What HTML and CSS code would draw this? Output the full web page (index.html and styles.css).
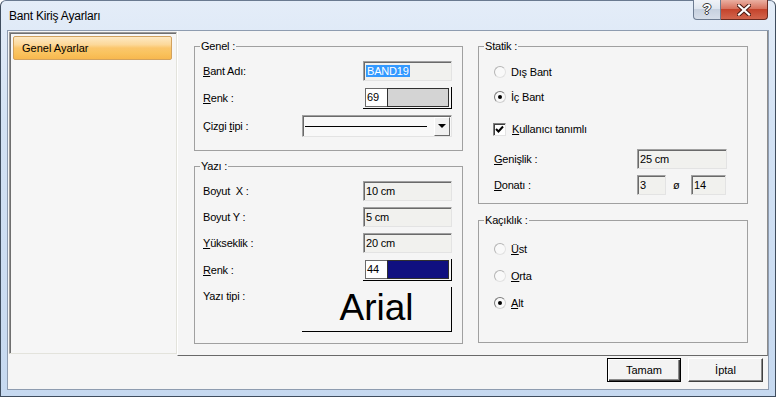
FILE: index.html
```html
<!DOCTYPE html>
<html lang="tr">
<head>
  <meta charset="UTF-8" />
  <title>Bant Kiriş Ayarları</title>
  <link rel="stylesheet" href="styles.css">
</head>
<body>
  <div class="window">
    <div class="titlebar">
      <span class="title">Bant Kiriş Ayarları</span>
      <div class="caption-btns">
        <span class="cap-help">?</span>
        <span class="cap-close">
          <svg width="14" height="12" viewBox="0 0 14 12">
            <path d="M2 1.5 L12 10.5 M12 1.5 L2 10.5" stroke="#4a1a12" stroke-width="4.2" stroke-linecap="square"/>
            <path d="M2 1.5 L12 10.5 M12 1.5 L2 10.5" stroke="#fff" stroke-width="2.2" stroke-linecap="square"/>
          </svg>
        </span>
      </div>
    </div>

    <div class="client">
      <div class="main">
        <div class="sidebar">
          <div class="nav-item">Genel Ayarlar</div>
        </div>

        <div class="panel">
          <div class="col">
            <div class="group genel">
              <div class="group-title">Genel :</div>
              <div class="group-body">
                <div class="row">
                  <span class="lbl"><u>B</u>ant Adı:</span>
                  <span class="edit"><span class="sel">BAND19</span></span>
                </div>
                <div class="row">
                  <span class="lbl"><u>R</u>enk :</span>
                  <span class="colorbox">
                    <span class="color-num">69</span>
                    <span class="color-swatch swatch-gray"></span>
                  </span>
                </div>
                <div class="row">
                  <span class="lbl lbl-short">Çizgi <u>t</u>ipi :</span>
                  <span class="combo">
                    <span class="combo-line"></span>
                    <span class="combo-btn"><span class="arrow"></span></span>
                  </span>
                </div>
              </div>
            </div>

            <div class="group yazi">
              <div class="group-title">Yazı :</div>
              <div class="group-body">
                <div class="row">
                  <span class="lbl">Boyut&nbsp; X :</span>
                  <span class="edit">10 cm</span>
                </div>
                <div class="row">
                  <span class="lbl">Boyut Y :</span>
                  <span class="edit">5 cm</span>
                </div>
                <div class="row">
                  <span class="lbl"><u>Y</u>ükseklik :</span>
                  <span class="edit">20 cm</span>
                </div>
                <div class="row">
                  <span class="lbl"><u>R</u>enk :</span>
                  <span class="colorbox">
                    <span class="color-num">44</span>
                    <span class="color-swatch swatch-navy"></span>
                  </span>
                </div>
                <div class="row font-row">
                  <span class="lbl lbl-short">Yazı tipi :</span>
                  <span class="font-box">Arial</span>
                </div>
              </div>
            </div>
          </div>

          <div class="col col-right">
            <div class="group statik">
              <div class="group-title">Statik :</div>
              <div class="group-body">
                <div class="radio-row mt-10"><span class="radio"></span>Dış Bant</div>
                <div class="radio-row mt-7"><span class="radio checked"></span>İç Bant</div>
                <div class="check-row mt-13">
                  <span class="check">
                    <svg width="11" height="11" viewBox="0 0 11 11"><path d="M2 5 L4.5 7.5 L9 2.5" fill="none" stroke="#000" stroke-width="2"/></svg>
                  </span>
                  <u>K</u>ullanıcı tanımlı
                </div>
                <div class="row mt-10">
                  <span class="lbl lbl-wide"><u>G</u>enişlik :</span>
                  <span class="edit edit-wide">25 cm</span>
                </div>
                <div class="row mt-6">
                  <span class="lbl lbl-wide"><u>D</u>onatı :</span>
                  <span class="edit edit-small">3</span>
                  <span class="phi">ø</span>
                  <span class="edit edit-mid">14</span>
                </div>
              </div>
            </div>

            <div class="group kacik">
              <div class="group-title">Kaçıklık :</div>
              <div class="group-body radios">
                <div class="radio-row"><span class="radio"></span><u>Ü</u>st</div>
                <div class="radio-row"><span class="radio"></span><u>O</u>rta</div>
                <div class="radio-row"><span class="radio checked"></span><u>A</u>lt</div>
              </div>
            </div>
          </div>
        </div>
      </div>

      <div class="footer">
        <button class="btn btn-default" type="button">Tamam</button>
        <button class="btn" type="button">İptal</button>
      </div>
    </div>
  </div>
</body>
</html>
```

FILE: styles.css
```css
* {
  box-sizing: border-box;
}
body {
  margin: 0;
  width: 776px;
  height: 397px;
  overflow: hidden;
  font-family: "Liberation Sans", Arial, sans-serif;
  font-size: 11px;
  color: #000;
  background: #fff;
}
u {
  text-decoration: underline;
  text-underline-offset: 1px;
}

/* window frame */
.window {
  width: 776px;
  height: 397px;
  display: flex;
  flex-direction: column;
  padding: 0 6px 6px 6px;
  border: 1px solid #3f4d5e;
  border-top-color: #6a7a90;
  border-radius: 6px 6px 0 0;
  background: linear-gradient(#e4edf8, #d3e2f4 30%, #c6d9f0 100%);
}
.titlebar {
  height: 29px;
  display: flex;
  justify-content: space-between;
  align-items: flex-start;
}
.title {
  margin: 8px 0 0 2px;
  font-size: 12px;
  line-height: 14px;
  letter-spacing: -0.2px;
}
.caption-btns {
  display: flex;
  margin: -1px 1px 0 0;
}
.cap-help {
  width: 28px;
  height: 20px;
  border: 1px solid #6d7c91;
  border-top: none;
  border-radius: 0 0 0 4px;
  background: linear-gradient(#f0f3f8, #dfe6ef 45%, #c7d1df 50%, #d6dee9);
  color: #fff;
  font-weight: bold;
  font-size: 14px;
  line-height: 18px;
  text-align: center;
  text-shadow: 1px 0 #3a3a3a, -1px 0 #3a3a3a, 0 1px #3a3a3a, 0 -1px #3a3a3a;
}
.cap-close {
  width: 47px;
  height: 20px;
  border: 1px solid #6b2a20;
  border-left: none;
  border-top: none;
  border-radius: 0 0 4px 0;
  background: linear-gradient(#eab0a2, #d8735f 45%, #c4442c 50%, #d2654d);
  display: flex;
  align-items: center;
  justify-content: center;
}

/* client area */
.client {
  flex: 1;
  display: flex;
  flex-direction: column;
  border: 1px solid #8e9cb0;
  background: #f5f5f5;
}
.main {
  height: 325px;
  display: flex;
}
.sidebar {
  width: 168px;
  margin: 1px 0 2px 1px;
  padding: 3px 4px 0 3px;
  border: 1px solid;
  border-color: #9a9a9a #e3e3dc #e3e3dc #9a9a9a;
  box-shadow: inset 1px 1px 0 #6f6f6f;
  background: #f6f6f6;
}
.nav-item {
  height: 24px;
  padding-left: 8px;
  line-height: 22px;
  border: 1px solid #d2a25e;
  border-radius: 2px;
  background: linear-gradient(#fde9c4 0%, #fcd899 35%, #fbc66c 50%, #fac460 70%, #f8b84e 100%);
}
.panel {
  flex: 1;
  display: flex;
  gap: 15px;
  padding: 15px 0 0 16px;
  border-left: 1px solid #fff;
  border-right: 1px solid #8b8b8b;
  border-bottom: 1px solid #696969;
}
.col {
  width: 269px;
  display: flex;
  flex-direction: column;
  gap: 15px;
}
.col-right {
  width: 270px;
  gap: 16px;
}

/* group boxes */
.group {
  border: 1px solid #a0a0a0;
}
.genel { height: 105px; }
.yazi { height: 178px; }
.statik { height: 158px; }
.kacik { height: 123px; }
.group-title {
  width: fit-content;
  height: 14px;
  margin: -8px 0 0 5px;
  padding: 0 1px;
  line-height: 14px;
  background: #f5f5f5;
  letter-spacing: -0.2px;
}
.group-body {
  display: flex;
  flex-direction: column;
  gap: 6px;
  padding: 8px 10px 0 8px;
}
.statik .group-body {
  gap: 0;
  padding: 0 0 0 15px;
}
.group-body.radios {
  gap: 9px;
  padding: 13px 0 0 15px;
}
.mt-6 { margin-top: 6px; }
.mt-7 { margin-top: 7px; }
.mt-10 { margin-top: 10px; }
.mt-13 { margin-top: 13px; }

.row {
  display: flex;
  align-items: center;
}
.lbl {
  width: 160px;
  flex-shrink: 0;
  letter-spacing: -0.2px;
}
.lbl-short { width: 99px; }
.lbl-wide { width: 143px; }

/* edit fields */
.edit {
  width: 89px;
  height: 20px;
  padding-left: 2px;
  line-height: 18px;
  border: 1px solid;
  border-color: #a0a0a0 #e3e3e3 #e3e3e3 #a0a0a0;
  box-shadow: inset 1px 1px 0 #6a6a6a;
  background: #f1f1ee;
  letter-spacing: -0.2px;
}
.edit-wide { width: 90px; }
.edit-small { width: 29px; }
.edit-mid { width: 35px; }
.sel {
  background: #3399ff;
  color: #fff;
  padding: 0 1px;
}
.phi {
  width: 25px;
  padding-left: 7px;
}

/* colour picker */
.colorbox {
  width: 90px;
  height: 22px;
  display: flex;
  padding: 1px 2px 1px 2px;
  border-right: 1px solid #000;
  border-bottom: 1px solid #000;
}
.color-num {
  width: 22px;
  padding-left: 1px;
  line-height: 17px;
  background: #fff;
  border: 1px solid #6a6a6a;
  border-right: none;
}
.color-swatch {
  flex: 1;
  border: 1px solid #303030;
}
.swatch-gray { background: #d4d4d4; }
.swatch-navy { background: #101080; }

/* line type combo */
.combo {
  width: 150px;
  height: 22px;
  display: flex;
  align-items: center;
  padding: 0 1px 0 2px;
  border: 1px solid;
  border-color: #a0a0a0 #e3e3e3 #e3e3e3 #a0a0a0;
  box-shadow: inset 1px 1px 0 #6a6a6a;
  background: #f8f8f8;
}
.combo-line {
  flex: 1;
  height: 1px;
  margin-right: 7px;
  background: #000;
}
.combo-btn {
  width: 16px;
  height: 19px;
  display: flex;
  align-items: center;
  justify-content: center;
  border: 1px solid;
  border-color: #fff #6a6a6a #6a6a6a #fff;
  background: #f0f0f0;
}
.arrow {
  width: 0;
  height: 0;
  border-left: 4px solid transparent;
  border-right: 4px solid transparent;
  border-top: 4px solid #000;
}

/* font preview */
.font-row {
  align-items: flex-start;
}
.font-row .lbl {
  margin-top: 3px;
}
.font-box {
  width: 151px;
  height: 45px;
  font-size: 37px;
  line-height: 42px;
  text-align: center;
  border-right: 1px solid #000;
  border-bottom: 1px solid #000;
}

/* radios and checkbox */
.radio-row, .check-row {
  display: flex;
  align-items: center;
  height: 18px;
  letter-spacing: -0.2px;
}
.check-row {
  height: 20px;
}
.radio {
  width: 12px;
  height: 12px;
  margin-right: 5px;
  border-radius: 50%;
  border: 1px solid #b4b4b4;
  border-right-color: #e2e2e2;
  border-bottom-color: #e2e2e2;
  background: #f9f9f9;
  display: flex;
  align-items: center;
  justify-content: center;
}
.radio.checked {
  border-color: #7a7a7a #d0d0d0 #d0d0d0 #7a7a7a;
}
.radio.checked::after {
  content: "";
  width: 4px;
  height: 4px;
  border-radius: 50%;
  background: #000;
}
.check {
  width: 13px;
  height: 13px;
  margin: 0 6px 0 -1px;
  border: 1px solid;
  border-color: #808080 #e3e3e3 #e3e3e3 #808080;
  box-shadow: inset 1px 1px 0 #404040;
  background: #fff;
  display: flex;
  align-items: center;
  justify-content: center;
}

/* buttons */
.footer {
  display: flex;
  justify-content: flex-end;
  gap: 7px;
  padding: 2px 5px 0 0;
}
.btn {
  width: 75px;
  height: 24px;
  padding: 0;
  font-family: "Liberation Sans", Arial, sans-serif;
  font-size: 11px;
  color: #000;
  background: #f3f3f3;
  border: 1px solid;
  border-color: #fff #404040 #404040 #fff;
  box-shadow: inset -1px -1px 0 #8a8a8a;
}
.btn-default {
  width: 74px;
  border-color: #000;
  box-shadow: inset 1px 1px 0 #fff, inset -1px -1px 0 #404040, inset -2px -2px 0 #8a8a8a;
}
```
